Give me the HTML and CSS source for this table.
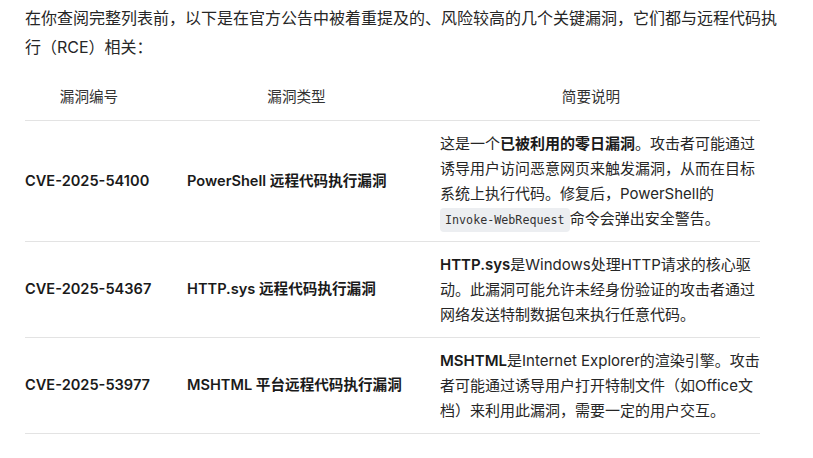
FILE: index.html
```html
<!DOCTYPE html>
<html lang="zh-CN">
<head>
<meta charset="utf-8">
<link rel="stylesheet" href="styles.css">
</head>
<body>
<div class="page">
  <p class="intro">在你查阅完整列表前，以下是在官方公告中被着重提及的、风险较高的几个关键漏洞，它们都与远程代码执行（RCE）相关：</p>
  <table class="vuln">
    <colgroup>
      <col class="c1"><col class="c2"><col class="c3">
    </colgroup>
    <thead>
      <tr><th>漏洞编号</th><th>漏洞类型</th><th>简要说明</th></tr>
    </thead>
    <tbody>
      <tr>
        <td class="strong">CVE-2025-54100</td>
        <td class="strong">PowerShell 远程代码执行漏洞</td>
        <td>这是一个<b>已被利用的零日漏洞</b>。攻击者可能通过诱导用户访问恶意网页来触发漏洞，从而在目标系统上执行代码。修复后，PowerShell的<code>Invoke-WebRequest</code>命令会弹出安全警告。</td>
      </tr>
      <tr>
        <td class="strong">CVE-2025-54367</td>
        <td class="strong">HTTP.sys 远程代码执行漏洞</td>
        <td><b>HTTP.sys</b>是Windows处理HTTP请求的核心驱动。此漏洞可能允许未经身份验证的攻击者通过网络发送特制数据包来执行任意代码。</td>
      </tr>
      <tr>
        <td class="strong">CVE-2025-53977</td>
        <td class="strong">MSHTML 平台远程代码执行漏洞</td>
        <td><b>MSHTML</b>是Internet Explorer的渲染引擎。攻击者可能通过诱导用户打开特制文件（如Office文档）来利用此漏洞，需要一定的用户交互。</td>
      </tr>
    </tbody>
  </table>
</div>
</body>
</html>
```

FILE: styles.css
```css
html, body {
  margin: 0;
  padding: 0;
  background: #ffffff;
}
body {
  font-family: Inter, "Noto Sans CJK SC", sans-serif;
  color: #1f1f1f;
}
.page {
  padding: 4px 30px 0 25px;
}
.intro {
  margin: 0 0 13px 0;
  font-size: 16px;
  line-height: 29px;
  color: #262626;
}
.vuln {
  width: 735px;
  border-collapse: collapse;
  table-layout: fixed;
  font-size: 15px;
  line-height: 25px;
}
.c1 { width: 145px; }
.c2 { width: 253px; }
.c3 { width: 337px; }
.vuln th {
  font-weight: 400;
  font-size: 14.6px;
  text-align: center;
  padding: 10px 17px;
  color: #333333;
  border-bottom: 1px solid #e3e3e3;
}
.vuln th:first-child { padding-left: 0; }
.vuln th:last-child { padding-right: 18px; }
.vuln td {
  padding: 10px 17px;
  vertical-align: middle;
  border-bottom: 1px solid #e3e3e3;
  color: #262626;
}
.vuln td:first-child { padding-left: 0; }
.vuln td:last-child { padding-right: 0; }
.vuln td.strong {
  font-weight: 600;
  font-size: 14.6px;
  color: #1a1a1a;
}
.vuln b {
  font-weight: 600;
  color: #1a1a1a;
}
.vuln code {
  font-family: "DejaVu Sans Mono", "Liberation Mono", monospace;
  font-size: 11.7px;
  line-height: 1;
  background: #eceef1;
  border-radius: 4px;
  padding: 5px 5px;
  color: #333333;
}
```
